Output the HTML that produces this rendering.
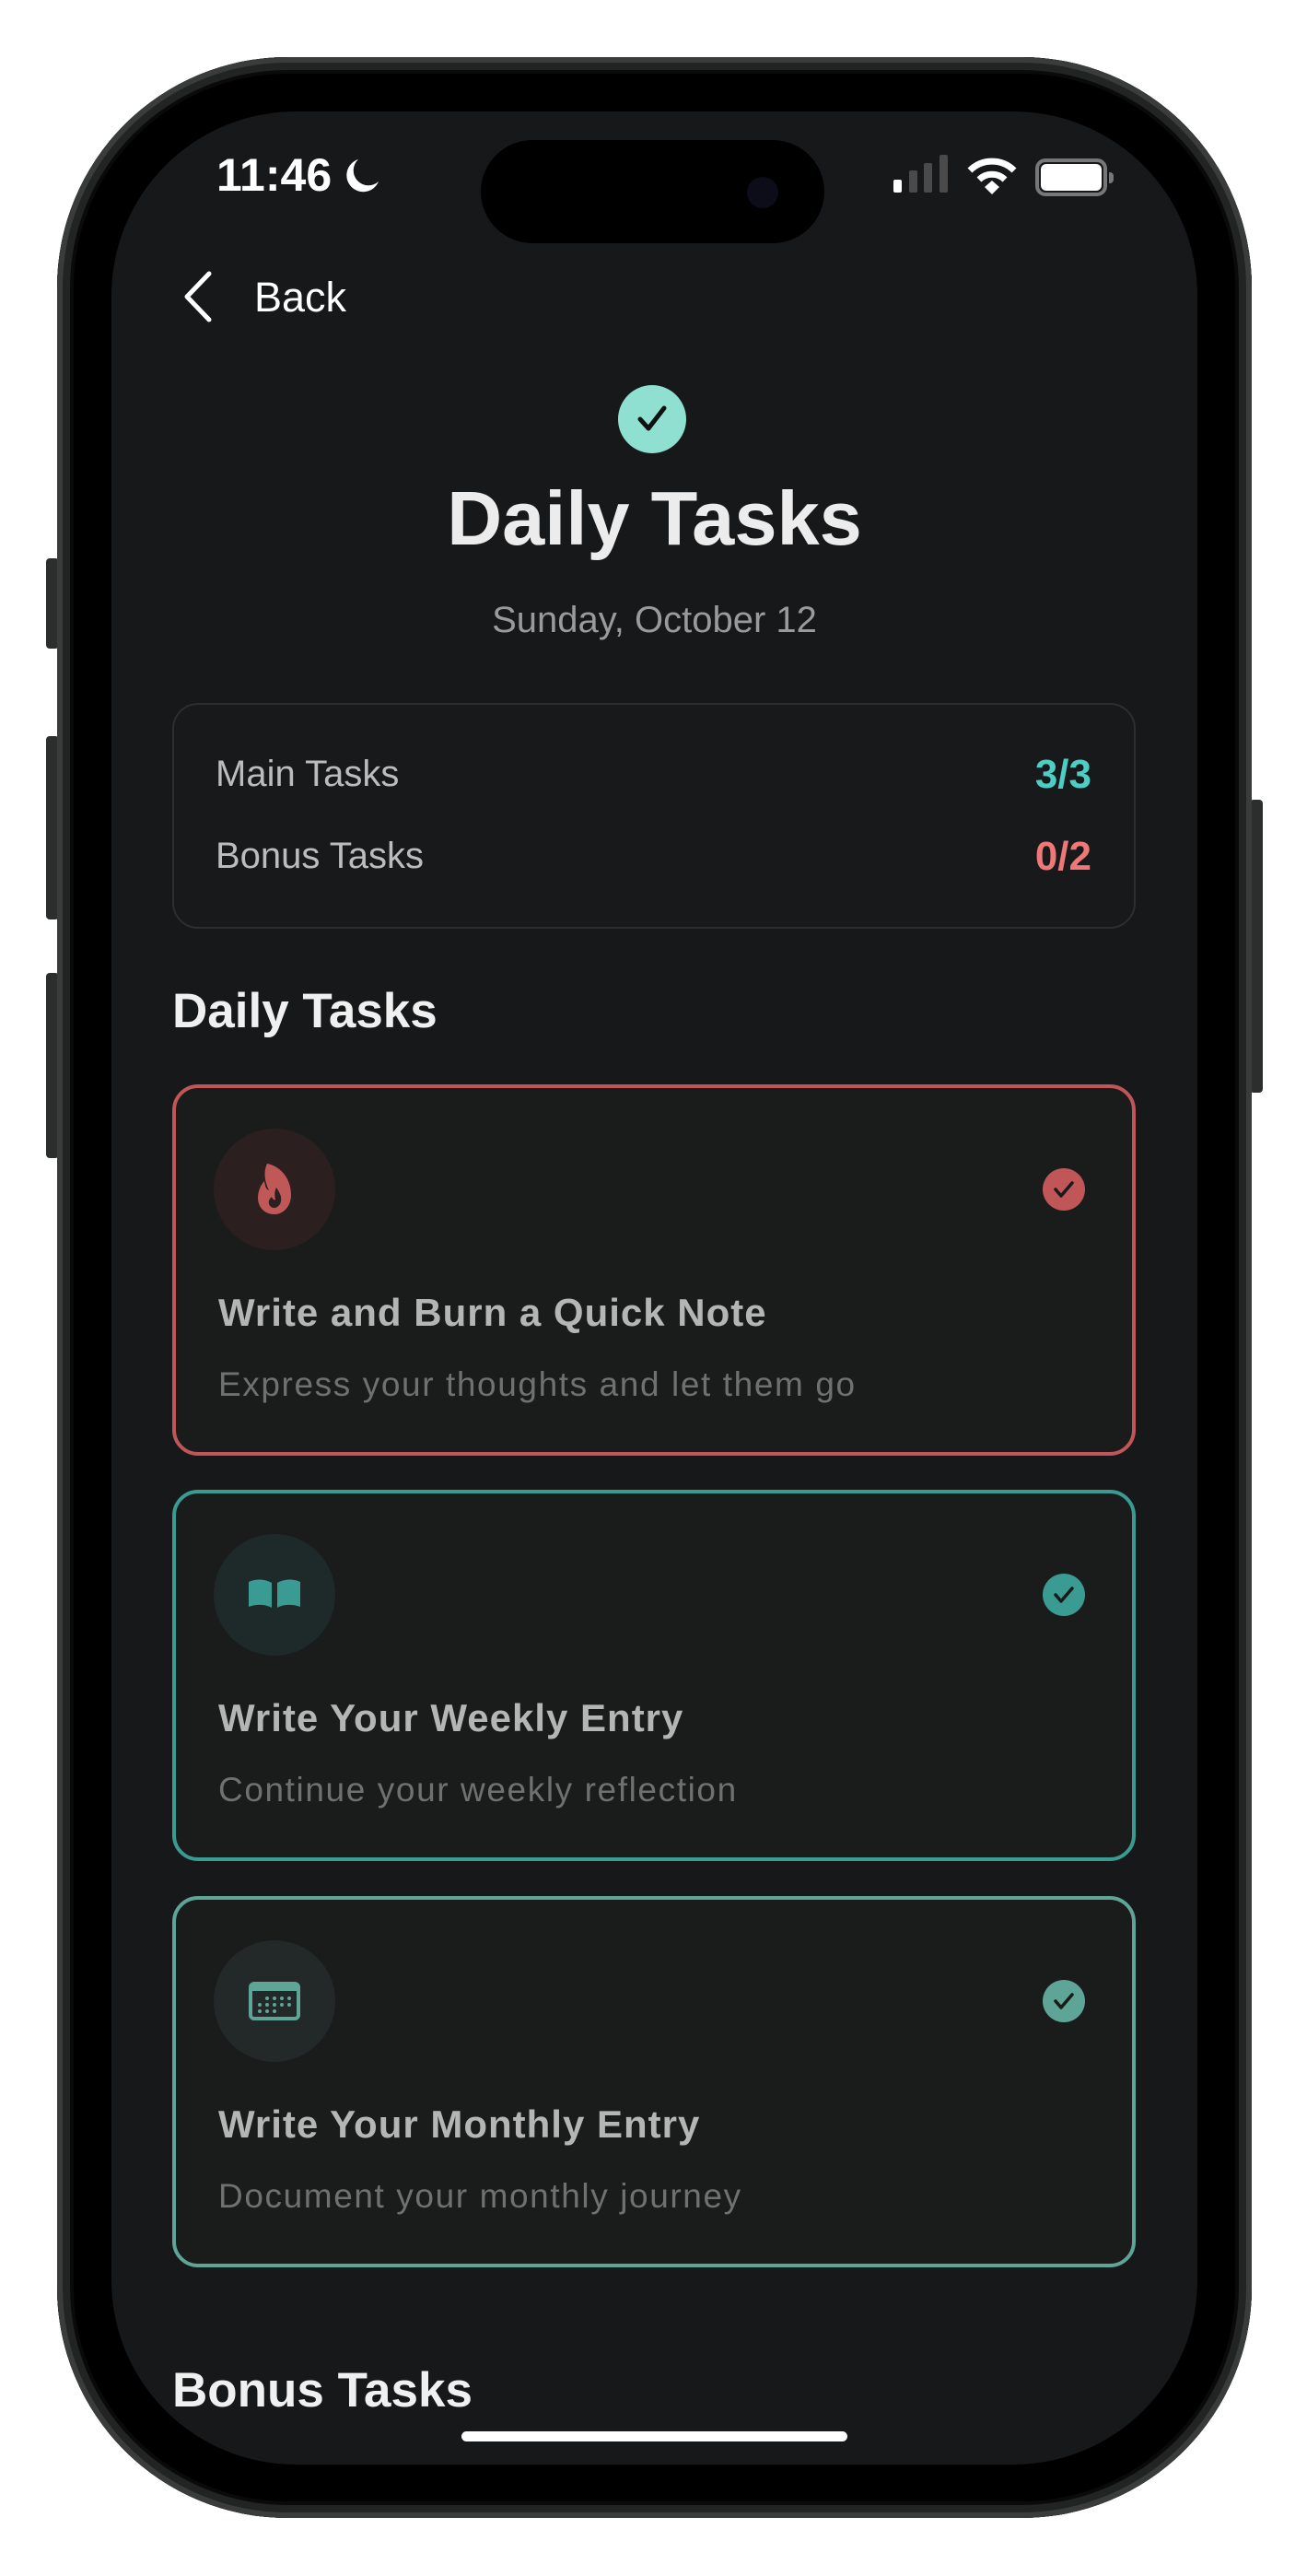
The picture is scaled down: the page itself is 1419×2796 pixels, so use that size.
<!DOCTYPE html>
<html><head><meta charset="utf-8"><style>
*{margin:0;padding:0;box-sizing:border-box}
body{width:1419px;height:2796px;background:#fff;position:relative;overflow:hidden;font-family:"Liberation Sans",sans-serif}
.abs{position:absolute}
.phone{left:62px;top:62px;width:1297px;height:2671px;border-radius:250px;background:#000;box-shadow:inset 0 0 0 6px #3a3c3c,inset 0 0 0 14px #222424,inset 0 0 0 18px #0a0a0a}
.btn{background:#2c2e2e;border-radius:4px}
.screen{left:121px;top:121px;width:1179px;height:2554px;border-radius:200px;background:#17181a;overflow:hidden}
.t{position:absolute;white-space:nowrap}
.card{position:absolute;left:66px;width:1046px;height:403px;border-radius:28px;border:4px solid;background:#1a1c1c}
.ic{position:absolute;left:41px;top:44px;width:132px;height:132px;border-radius:50%}
.ck{position:absolute;left:941px;top:87px;width:46px;height:46px;border-radius:50%}
.ct{position:absolute;left:46px;top:220px;font-size:42px;font-weight:bold;color:#b5b5b5;letter-spacing:1px}
.cs{position:absolute;left:46px;top:301px;font-size:37px;color:#707070;letter-spacing:1.6px}
</style></head><body>
<div class="abs btn" style="left:50px;top:606px;width:14px;height:98px"></div>
<div class="abs btn" style="left:50px;top:799px;width:14px;height:199px"></div>
<div class="abs btn" style="left:50px;top:1056px;width:14px;height:201px"></div>
<div class="abs btn" style="left:1357px;top:868px;width:14px;height:318px"></div>
<div class="abs phone"></div>
<div class="abs screen">
  <div class="t" style="left:114px;top:40px;font-size:50px;font-weight:bold;color:#fff">11:46</div>
  <svg class="abs" style="left:250px;top:48px" width="44" height="44" viewBox="0 0 44 44"><path d="M18 4A18 18 0 1 0 40 28 15 15 0 0 1 18 4z" fill="#fff"/></svg>
  <div class="abs" style="left:401px;top:31px;width:373px;height:112px;border-radius:56px;background:#000"></div>
  <div class="abs" style="left:690px;top:71px;width:34px;height:34px;border-radius:50%;background:#0d0d1a"></div>
  <div class="abs" style="left:849px;top:74px;width:9px;height:14px;border-radius:2px;background:#fff"></div>
  <div class="abs" style="left:866px;top:64px;width:9px;height:24px;border-radius:2px;background:#4a4a4a"></div>
  <div class="abs" style="left:882px;top:56px;width:9px;height:32px;border-radius:2px;background:#4a4a4a"></div>
  <div class="abs" style="left:899px;top:47px;width:9px;height:41px;border-radius:2px;background:#4a4a4a"></div>
  <svg class="abs" style="left:929px;top:50px" width="54" height="42" viewBox="0 0 54 42"><path d="M3 14A34 34 0 0 1 51 14" stroke="#fff" stroke-width="7" fill="none"/><path d="M13 24A20 20 0 0 1 41 24" stroke="#fff" stroke-width="7" fill="none"/><path d="M19 32L27 25 35 32 27 40z" fill="#fff"/></svg>
  <div class="abs" style="left:1003px;top:51px;width:78px;height:41px;border-radius:11px;border:4px solid #777"></div>
  <div class="abs" style="left:1009px;top:57px;width:66px;height:29px;border-radius:6px;background:#fff"></div>
  <div class="abs" style="left:1083px;top:66px;width:5px;height:12px;border-radius:0 4px 4px 0;background:#777"></div>
  <svg class="abs" style="left:74px;top:172px" width="40" height="58" viewBox="0 0 40 58"><path d="M32 4L8 29 32 54" stroke="#fff" stroke-width="5" fill="none" stroke-linecap="round" stroke-linejoin="round"/></svg>
  <div class="t" style="left:155px;top:176px;font-size:45px;color:#fff">Back</div>
  <div class="abs" style="left:550px;top:297px;width:74px;height:74px;border-radius:50%;background:#8fe0d0"></div>
  <svg class="abs" style="left:550px;top:297px" width="74" height="74" viewBox="0 0 74 74"><path d="M24 37L33 47 50 25" stroke="#111" stroke-width="5" fill="none" stroke-linecap="round" stroke-linejoin="round"/></svg>
  <div class="t" style="left:0;width:1179px;text-align:center;top:394px;font-size:83px;font-weight:bold;color:#ececec">Daily Tasks</div>
  <div class="t" style="left:0;width:1179px;text-align:center;top:530px;font-size:40px;color:#9a9a9a">Sunday, October 12</div>
  <div class="abs" style="left:66px;top:642px;width:1046px;height:245px;border-radius:28px;border:2px solid #2c2e30;background:#18191b"></div>
  <div class="t" style="left:113px;top:697px;font-size:40px;color:#bcbcbc">Main Tasks</div>
  <div class="t" style="left:113px;top:786px;font-size:40px;color:#bcbcbc">Bonus Tasks</div>
  <div class="t" style="right:115px;top:695px;font-size:44px;font-weight:bold;color:#4ecdc4">3/3</div>
  <div class="t" style="right:115px;top:784px;font-size:44px;font-weight:bold;color:#ee7777">0/2</div>
  <div class="t" style="left:66px;top:946px;font-size:53px;font-weight:bold;color:#f0f0f0">Daily Tasks</div>
  <div class="card" style="top:1056px;border-color:#c05658">
    <div class="ic" style="background:#2c1f1f"><svg width="132" height="132" viewBox="0 0 132 132"><path d="M58 38C70 40 84 52 84 72 84 84 76 93 66 93 55 93 48 85 48 75 48 67 52 60 55 57 56 63 57 66 60 67 55 57 54 46 58 38z" fill="#c05858"/><path d="M68 64C72 70 74 74 73 79 72 84 68 86 66 86 62 86 59 83 60 78 61 76 62 75 63 74 64 77 66 78 67 77 66 72 66 68 68 64z" fill="#2c1f1f"/></svg></div>
    <div class="ck" style="background:#c05658"><svg width="46" height="46" viewBox="0 0 46 46"><path d="M14 23L20 30 32 16" stroke="#1a1a1a" stroke-width="3.5" fill="none" stroke-linecap="round" stroke-linejoin="round"/></svg></div>
    <div class="ct">Write and Burn a Quick Note</div>
    <div class="cs">Express your thoughts and let them go</div>
  </div>
  <div class="card" style="top:1496px;border-color:#3a9b93">
    <div class="ic" style="background:#1d2a29"><svg width="132" height="132" viewBox="0 0 132 132"><path d="M38 52C46 48 56 49 63 53V80C56 76 46 76 38 79z" fill="#3a9b93"/><path d="M94 52C86 48 76 49 69 53V80C76 76 86 76 94 79z" fill="#3a9b93"/></svg></div>
    <div class="ck" style="background:#3a9b93"><svg width="46" height="46" viewBox="0 0 46 46"><path d="M14 23L20 30 32 16" stroke="#1a1a1a" stroke-width="3.5" fill="none" stroke-linecap="round" stroke-linejoin="round"/></svg></div>
    <div class="ct">Write Your Weekly Entry</div>
    <div class="cs">Continue your weekly reflection</div>
  </div>
  <div class="card" style="top:1937px;border-color:#5fa597">
    <div class="ic" style="background:#222928"><svg width="132" height="132" viewBox="0 0 132 132"><rect x="40" y="47" width="52" height="38" rx="4" fill="none" stroke="#5fa597" stroke-width="4"/><rect x="40" y="47" width="52" height="8" fill="#5fa597"/><g fill="#5fa597"><circle cx="58" cy="63" r="2"/><circle cx="66" cy="63" r="2"/><circle cx="74" cy="63" r="2"/><circle cx="82" cy="63" r="2"/><circle cx="50" cy="70" r="2"/><circle cx="58" cy="70" r="2"/><circle cx="66" cy="70" r="2"/><circle cx="74" cy="70" r="2"/><circle cx="82" cy="70" r="2"/><circle cx="50" cy="77" r="2"/><circle cx="58" cy="77" r="2"/><circle cx="66" cy="77" r="2"/></g></svg></div>
    <div class="ck" style="background:#5fa597"><svg width="46" height="46" viewBox="0 0 46 46"><path d="M14 23L20 30 32 16" stroke="#1a1a1a" stroke-width="3.5" fill="none" stroke-linecap="round" stroke-linejoin="round"/></svg></div>
    <div class="ct">Write Your Monthly Entry</div>
    <div class="cs">Document your monthly journey</div>
  </div>
  <div class="t" style="left:66px;top:2443px;font-size:53px;font-weight:bold;color:#f0f0f0">Bonus Tasks</div>
  <div class="abs" style="left:380px;top:2518px;width:419px;height:11px;border-radius:6px;background:#fff"></div>
</div>
</body></html>
